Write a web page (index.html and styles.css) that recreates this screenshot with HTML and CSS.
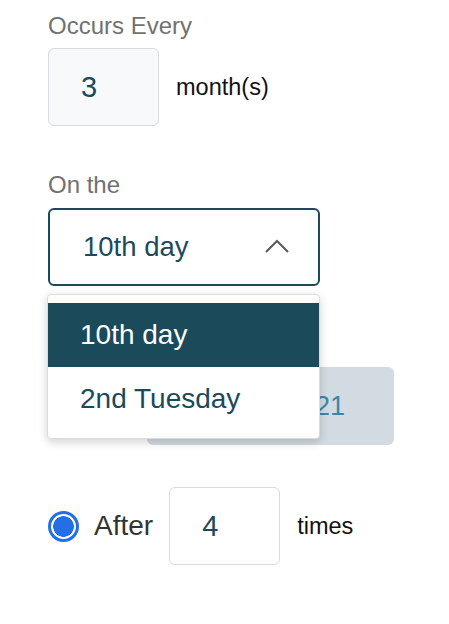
FILE: index.html
```html
<!DOCTYPE html>
<html lang="en">
<head>
<meta charset="utf-8">
<title>Recurrence</title>
<link rel="stylesheet" href="styles.css">
</head>
<body>
<div class="page">
  <div class="field-label first">Occurs Every</div>
  <div class="row">
    <div class="num-box tinted">3</div>
    <span class="suffix">month(s)</span>
  </div>

  <div class="field-label section">On the</div>
  <div class="select-wrap">
    <div class="select">
      <span class="select-value">10th day</span>
      <svg class="chevron" width="26" height="16" viewBox="0 0 26 16"><polyline points="2,14 13,3 24,14" fill="none" stroke="#5a5a5a" stroke-width="2"/></svg>
    </div>
    <ul class="menu">
      <li class="menu-item active">10th day</li>
      <li class="menu-item">2nd Tuesday</li>
    </ul>
  </div>

  <div class="row end-row">
    <span class="radio"></span>
    <span class="radio-gap"></span>
    <div class="date-box">21</div>
  </div>

  <div class="row after-row">
    <span class="radio checked"></span>
    <span class="radio-label">After</span>
    <div class="num-box">4</div>
    <span class="suffix">times</span>
  </div>
</div>
</body>
</html>
```

FILE: styles.css
```css
* { box-sizing: border-box; }
html, body { margin: 0; padding: 0; background: #ffffff; }
body { font-family: "Liberation Sans", Arial, Helvetica, sans-serif; }

.page { padding-left: 48px; }

.field-label {
  font-size: 24px;
  line-height: 28px;
  color: #717171;
  margin-bottom: 8px;
}
.field-label.first { padding-top: 12px; }
.field-label.section { margin-top: 45px; margin-bottom: 9px; }

.row {
  display: flex;
  align-items: center;
}

.num-box {
  width: 111px;
  height: 78px;
  border: 1px solid #d6dbdf;
  border-radius: 6px;
  background: #ffffff;
  color: #1b4a5b;
  font-size: 29px;
  display: flex;
  align-items: center;
  padding-left: 32px;
}
.num-box.tinted { background: #f7f9fb; }

.suffix {
  font-size: 23.5px;
  color: #111111;
  margin-left: 17px;
}

.select-wrap { position: relative; width: 272px; }
.select {
  height: 78px;
  border: 2px solid #1b4a5b;
  border-radius: 6px;
  display: flex;
  align-items: center;
  justify-content: space-between;
  padding: 0 28px 0 33px;
  color: #1b4a5b;
  font-size: 27.5px;
}
.chevron { display: block; margin-top: -3px; }

.menu {
  position: absolute;
  top: 86px;
  left: -1px;
  width: 273px;
  margin: 0;
  padding: 8px 0 7px;
  list-style: none;
  background: #ffffff;
  border: 1px solid #dcdcdc;
  border-radius: 4px;
  box-shadow: 0 3px 10px rgba(0, 0, 0, 0.18);
  z-index: 10;
}
.menu-item {
  height: 64px;
  display: flex;
  align-items: center;
  padding-left: 32px;
  font-size: 28px;
  color: #1b4a5b;
}
.menu-item.active { background: #1b4a5b; color: #ffffff; }

.radio {
  width: 31px;
  height: 31px;
  border-radius: 50%;
  border: 2px solid #8a8a8a;
  background: #ffffff;
  flex: none;
}
.radio.checked {
  border: 3px solid #2370e6;
  background: radial-gradient(circle, #2370e6 0 10px, #ffffff 10.6px);
}
.radio-label {
  font-size: 28px;
  color: #333333;
  margin-left: 15px;
  margin-right: 16px;
}
.radio-gap { width: 68px; flex: none; }

.end-row { margin-top: 81px; }

.date-box {
  width: 247px;
  height: 78px;
  border-radius: 6px;
  background: #d2dbe1;
  color: #3a88a8;
  font-size: 27px;
  display: flex;
  align-items: center;
  justify-content: flex-end;
  padding-right: 49px;
}

.after-row { margin-top: 42px; }
```
